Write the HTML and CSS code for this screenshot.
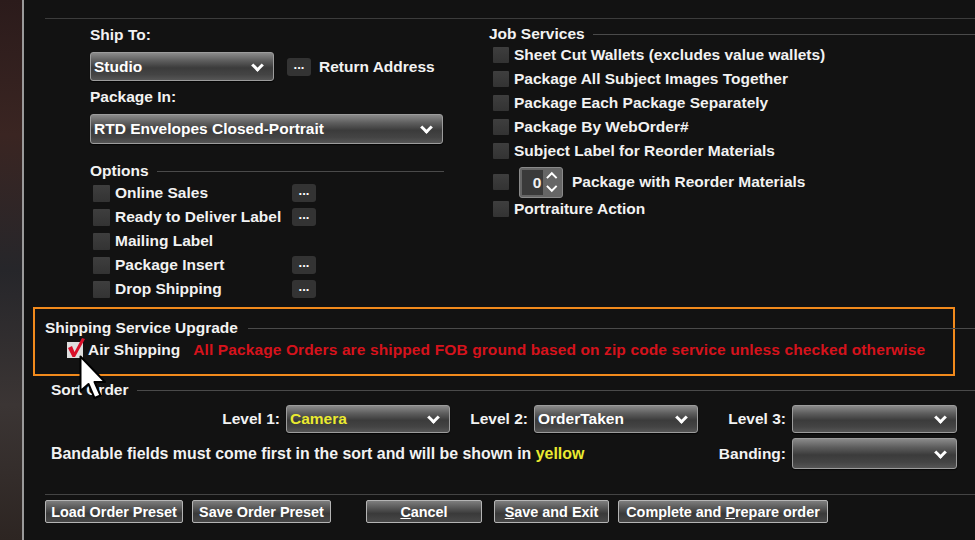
FILE: index.html
```html
<!DOCTYPE html>
<html lang="en">

<head>
    <meta charset="UTF-8">
    <link rel="stylesheet" href="styles.css">
    <title>Order Options</title>
</head>

<body>
    <div class="photo"></div>

    <div class="dialog">
        <div class="top-rule"></div>

        <div class="upper">
            <!-- 左欄：寄送 / 包裝 / 選項 -->
            <div class="col-left">
                <div class="field-label">Ship To:</div>
                <div class="ship-row">
                    <div class="select ship-select"><span>Studio</span></div>
                    <button class="dots">...</button>
                    <span class="text">Return Address</span>
                </div>
                <div class="field-label pkg-label">Package In:</div>
                <div class="select pkg-select"><span>RTD Envelopes Closed-Portrait</span></div>

                <div class="legend options-legend"><span>Options</span></div>
                <div class="opt-row"><i class="box"></i><span class="opt-text">Online Sales</span><button class="dots">...</button></div>
                <div class="opt-row"><i class="box"></i><span class="opt-text">Ready to Deliver Label</span><button class="dots">...</button></div>
                <div class="opt-row"><i class="box"></i><span class="opt-text">Mailing Label</span></div>
                <div class="opt-row"><i class="box"></i><span class="opt-text">Package Insert</span><button class="dots">...</button></div>
                <div class="opt-row"><i class="box"></i><span class="opt-text">Drop Shipping</span><button class="dots">...</button></div>
            </div>

            <!-- 右欄：Job Services -->
            <div class="col-right">
                <div class="legend job-legend"><span>Job Services</span></div>
                <div class="job-row"><i class="box"></i><span>Sheet Cut Wallets (excludes value wallets)</span></div>
                <div class="job-row"><i class="box"></i><span>Package All Subject Images Together</span></div>
                <div class="job-row"><i class="box"></i><span>Package Each Package Separately</span></div>
                <div class="job-row"><i class="box"></i><span>Package By WebOrder#</span></div>
                <div class="job-row"><i class="box"></i><span>Subject Label for Reorder Materials</span></div>
                <div class="job-row spin-row">
                    <i class="box"></i>
                    <div class="spinner">
                        <span class="spin-value">0</span>
                        <svg class="spin-arrows" width="16" height="26" viewBox="0 0 16 26">
                            <polyline points="3,9 8,4 13,9" fill="none" stroke="#fff" stroke-width="2" />
                            <polyline points="3,17 8,22 13,17" fill="none" stroke="#fff" stroke-width="2" />
                        </svg>
                    </div>
                    <span>Package with Reorder Materials</span>
                </div>
                <div class="job-row"><i class="box"></i><span>Portraiture Action</span></div>
            </div>
        </div>

        <!-- 加亮框：運送升級 -->
        <div class="upgrade">
            <div class="legend upgrade-legend"><span>Shipping Service Upgrade</span></div>
            <div class="air-row">
                <span class="checked">
                    <svg width="20" height="22" viewBox="0 0 20 22">
                        <path d="M2 11 L6 9 L8.5 15 L16 1 L19 2 L9 20 L6.5 20 Z" fill="#d8102a" />
                    </svg>
                </span>
                <span class="air-text">Air Shipping</span>
                <span class="warning">All Package Orders are shipped FOB ground based on zip code service unless checked otherwise</span>
            </div>
        </div>

        <div class="legend sort-legend"><span>Sort Order</span></div>
        <div class="level-row">
            <span class="sort-label level-1">Level 1:</span>
            <div class="select sort-select"><span class="yellow">Camera</span></div>
            <span class="sort-label level-2">Level 2:</span>
            <div class="select sort-select"><span>OrderTaken</span></div>
            <span class="sort-label level-3">Level 3:</span>
            <div class="select sort-select wide"><span></span></div>
        </div>
        <div class="band-row">
            <span class="band-note">Bandable fields must come first in the sort and will be shown in <span class="yellow">yellow</span></span>
            <span class="sort-label banding">Banding:</span>
            <div class="select sort-select wide band-select"><span></span></div>
        </div>

        <div class="bottom-rule"></div>
        <div class="btn-row">
            <button class="btn" id="load-preset">Load Order Preset</button>
            <button class="btn" id="save-preset">Save Order Preset</button>
            <button class="btn" id="cancel"><u>C</u>ancel</button>
            <button class="btn" id="save-exit"><u>S</u>ave and Exit</button>
            <button class="btn" id="complete">Complete and <u>P</u>repare order</button>
        </div>

        <!-- 滑鼠游標 -->
        <svg class="cursor" width="28" height="46" viewBox="0 0 28 46">
            <path d="M1.5 1.5 L1.5 36 L9.5 29 L15.5 43 L21.5 40.5 L15.5 27 L26 27 Z" fill="#fff" stroke="#000" stroke-width="2" stroke-linejoin="round" />
        </svg>
    </div>
</body>

</html>
```

FILE: styles.css
```css
body {
    margin: 0;
    width: 975px;
    height: 540px;
    overflow: hidden;
    display: flex;
    background-color: #121212;
    font-family: "Liberation Sans", Arial, sans-serif;
    font-weight: bold;
    font-size: 15.5px;
    color: #f2f2f2;
}

.photo {
    width: 22px;
    flex-shrink: 0;
    background: linear-gradient(#2b1b1b 0%, #3a2522 25%, #26262a 50%, #3b3534 75%, #2d2522 100%);
}

.dialog {
    position: relative;
    flex: 1;
    border-left: 2px solid #9a9a9a;
    background-color: #121212;
}

.top-rule {
    margin-top: 18px;
    margin-left: 21px;
    border-top: 1px solid #3c3c3c;
}

/* ---------- upper two columns ---------- */

.upper {
    display: flex;
    padding-left: 66px;
    height: 281px;
}

.col-left {
    width: 354px;
    margin-right: 45px;
}

.col-right {
    flex: 1;
    padding-top: 6px;
}

.field-label {
    margin-top: 7px;
    line-height: 18px;
}

.ship-row {
    display: flex;
    align-items: center;
    margin-top: 8px;
}

.ship-row .text {
    margin-left: 8px;
}

.pkg-label {
    margin-top: 7px;
}

.select {
    position: relative;
    box-sizing: border-box;
    display: flex;
    align-items: center;
    flex-shrink: 0;
    padding-left: 3px;
    border: 1px solid #9c9c9c;
    border-radius: 3px;
    background: linear-gradient(#8a8a8a 0%, #5e5e5e 28%, #3b3b3b 55%, #444 80%, #555 100%);
    box-shadow: 0 1px 1px rgba(0, 0, 0, 0.8);
    color: #fff;
}

.select::after {
    content: "";
    position: absolute;
    right: 11px;
    top: 50%;
    width: 6px;
    height: 6px;
    margin-top: -6px;
    border-right: 3px solid #fff;
    border-bottom: 3px solid #fff;
    transform: rotate(45deg);
}

.ship-select {
    width: 184px;
    height: 29px;
    margin-right: 13px;
}

.pkg-select {
    width: 353px;
    height: 30px;
    margin-top: 8px;
}

.dots {
    width: 24px;
    height: 18px;
    padding: 0 0 4px;
    border: none;
    border-radius: 3px;
    background-color: #333;
    color: #fff;
    font-family: "Liberation Sans", Arial, sans-serif;
    font-weight: bold;
    font-size: 13px;
    line-height: 14px;
}

.legend {
    display: flex;
    align-items: center;
    line-height: 18px;
}

.legend::after {
    content: "";
    flex: 1;
    margin-left: 8px;
    border-top: 1px solid #4a4a4a;
}

.options-legend {
    margin-top: 18px;
    margin-bottom: 1px;
}

.opt-row {
    display: flex;
    align-items: center;
    height: 24px;
    padding-left: 3px;
}

.opt-text {
    width: 177px;
    margin-left: 5px;
}

.box {
    display: block;
    width: 17px;
    height: 17px;
    flex-shrink: 0;
    border-radius: 1px;
    background: linear-gradient(#3e3e3e, #333);
}

.job-row {
    display: flex;
    align-items: center;
    height: 24px;
    padding-left: 4px;
}

.job-row .box {
    width: 16px;
    height: 16px;
    margin-right: 5px;
}

.spin-row {
    height: 32px;
    margin-top: 3px;
    margin-bottom: -1px;
}

.spinner {
    box-sizing: border-box;
    display: flex;
    align-items: center;
    width: 44px;
    height: 31px;
    margin: 0 9px 0 5px;
    padding: 2px;
    border: 1px solid #8a8a8a;
    border-radius: 3px;
    background-color: #666;
}

.spin-value {
    width: 20px;
    height: 100%;
    padding-right: 2px;
    background-color: #3a3a3a;
    text-align: right;
    line-height: 26px;
}

.spin-arrows {
    margin-left: 1px;
}

/* ---------- shipping upgrade ---------- */

.upgrade {
    width: 922px;
    box-sizing: border-box;
    margin-top: 7px;
    margin-left: 9px;
    padding: 10px 0 15px 10px;
    border: 2px solid #f28a1c;
}

.upgrade-legend::after {
    margin-right: -22px;
    margin-left: 10px;
}

.air-row {
    display: flex;
    align-items: center;
    height: 18px;
    margin-top: 4px;
    padding-left: 22px;
}

.checked {
    position: relative;
    width: 16px;
    height: 16px;
    background-color: #dedede;
}

.checked svg {
    position: absolute;
    left: -1px;
    top: -5px;
}

.air-text {
    margin-left: 5px;
    margin-right: 13px;
}

.warning {
    color: #d6121c;
    letter-spacing: 0.12px;
}

/* ---------- sort order ---------- */

.sort-legend {
    margin-top: 5px;
    padding-left: 27px;
}

.level-row {
    display: flex;
    align-items: center;
    margin-top: 6px;
    padding-left: 198px;
}

.sort-label {
    flex-shrink: 0;
    margin-right: 6px;
    text-align: right;
}

.level-1 {
    width: 58px;
}

.level-2 {
    width: 59px;
    margin-left: 19px;
}

.level-3 {
    width: 59px;
    margin-left: 29px;
}

.sort-select {
    width: 164px;
    height: 28px;
}

.sort-select.wide {
    width: 165px;
}

.yellow {
    color: #eaea30;
}

.band-row {
    display: flex;
    align-items: center;
    margin-top: 5px;
    padding-left: 27px;
}

.band-note {
    font-size: 15.9px;
}

.banding {
    margin-left: auto;
}

.band-select {
    height: 31px;
    margin-right: 18px;
}

/* ---------- bottom buttons ---------- */

.bottom-rule {
    margin-top: 25px;
    margin-left: 21px;
    border-top: 1px solid #444;
}

.btn-row {
    display: flex;
    margin-top: 5px;
    padding-left: 21px;
}

.btn {
    height: 23px;
    padding: 0;
    border: 1px solid #b4b4b4;
    border-radius: 2px;
    background: linear-gradient(#7e7e7e 0%, #555 35%, #3a3a3a 60%, #484848 100%);
    color: #fff;
    font-family: "Liberation Sans", Arial, sans-serif;
    font-weight: bold;
    font-size: 14.4px;
}

#load-preset {
    width: 138px;
}

#save-preset {
    width: 139px;
    margin-left: 9px;
}

#cancel {
    width: 116px;
    margin-left: 35px;
}

#save-exit {
    width: 115px;
    margin-left: 12px;
}

#complete {
    width: 210px;
    margin-left: 9px;
}

.cursor {
    position: absolute;
    left: 55px;
    top: 355px;
}
```
